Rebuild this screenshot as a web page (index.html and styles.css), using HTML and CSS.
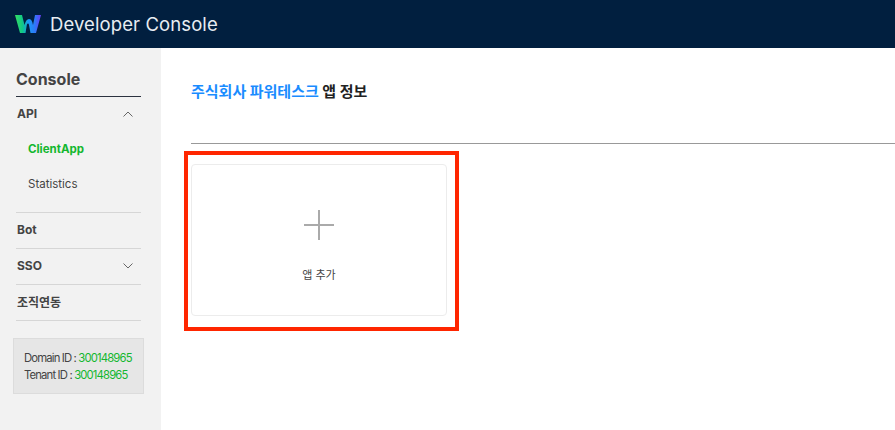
FILE: index.html
```html
<!DOCTYPE html>
<html lang="ko">

<head>
    <meta charset="UTF-8">
    <meta name="viewport" content="width=device-width, initial-scale=1.0">
    <title>Developer Console</title>
    <link rel="stylesheet" href="styles.css">
</head>

<body>

    <header class="topbar">
        <svg class="logo" width="26" height="20" viewBox="0 0 26 20">
            <defs>
                <linearGradient id="logoFill" x1="0" y1="0" x2="1" y2="0">
                    <stop offset="0" stop-color="#35e060"></stop>
                    <stop offset="0.3" stop-color="#0fc58a"></stop>
                    <stop offset="0.5" stop-color="#1a9bf5"></stop>
                    <stop offset="0.75" stop-color="#2a7cf8"></stop>
                    <stop offset="1" stop-color="#6a3df5"></stop>
                </linearGradient>
            </defs>
            <path d="M0 1H7L9.500 11C10.500 7 12 5 14 5C16.500 5 17.500 8 18 11L20 1H26L21 19H15.500L14 11C13.800 10 13.500 9.500 13 9.500C12.500 9.500 12 10 11.800 11L10.500 19H5Z" fill="url(#logoFill)"></path>
        </svg>
        <span class="topbar-title">Developer Console</span>
    </header>

    <div class="layout">
        <aside class="sidebar">
            <h2 class="sidebar-title">Console</h2>

            <div class="menu-group menu-group-open">
                <div class="menu-head">
                    <span>API</span>
                    <svg class="chevron" width="10" height="6" viewBox="0 0 10 6"><path d="M.5 5.500L5 1l4.500 4.500"></path></svg>
                </div>
                <a class="submenu submenu-active">ClientApp</a>
                <a class="submenu">Statistics</a>
            </div>

            <div class="menu-group">
                <div class="menu-head"><span>Bot</span></div>
            </div>

            <div class="menu-group">
                <div class="menu-head">
                    <span>SSO</span>
                    <svg class="chevron" width="10" height="6" viewBox="0 0 10 6"><path d="M.5 .5L5 5l4.500-4.500"></path></svg>
                </div>
            </div>

            <div class="menu-group">
                <div class="menu-head"><span>조직연동</span></div>
            </div>

            <div class="id-box">
                <p>Domain ID : <b>300148965</b></p>
                <p>Tenant ID : <b>300148965</b></p>
            </div>
        </aside>

        <main class="content">
            <h1 class="page-title"><em>주식회사 파워테스크</em> 앱 정보</h1>
            <hr class="divider">

            <div class="app-list">
                <div class="add-card">
                    <span class="plus"></span>
                    <span class="add-label">앱 추가</span>
                    <div class="highlight"></div>
                </div>
            </div>
        </main>
    </div>

</body>

</html>
```

FILE: styles.css
```css
* {
    margin: 0;
    box-sizing: border-box;
}

body {
    font-family: Inter, "Noto Sans CJK KR", sans-serif;
    width: 895px;
    height: 430px;
    overflow: hidden;
    background-color: #fff;
    color: #333;
}

.topbar {
    height: 48px;
    background-color: #011f3f;
    display: flex;
    align-items: center;
    padding-left: 15px;
    gap: 9px;
}

.logo {
    flex-shrink: 0;
}

.topbar-title {
    color: #e8edf2;
    font-size: 18.500px;
    letter-spacing: 0.1px;
}

.layout {
    display: flex;
    height: 382px;
}

.sidebar {
    width: 161px;
    background-color: #f2f2f2;
    padding: 21px 20px 0 16px;
    flex-shrink: 0;
}

.sidebar-title {
    font-size: 16px;
    line-height: 20px;
    height: 28px;
    font-weight: 700;
    color: #444;
    border-bottom: 1px solid #2c3340;
}

.menu-group {
    border-bottom: 1px solid #d6d6d6;
}

.menu-group-open {
    padding-bottom: 10px;
}

.menu-head {
    height: 35px;
    padding: 0 8px 2px 1px;
    display: flex;
    align-items: center;
    justify-content: space-between;
    font-size: 12px;
    font-weight: 700;
    color: #444;
}

.chevron {
    fill: none;
    stroke: #666;
    stroke-width: 1;
}

.submenu {
    display: block;
    height: 35px;
    line-height: 35px;
    padding-left: 12px;
    font-size: 11.500px;
    color: #444;
}

.submenu-active {
    color: #13b72f;
    font-weight: 700;
}

.id-box {
    margin: 17px -3px 0 -3px;
    height: 56px;
    padding: 11px 0 0 10px;
    background-color: #e6e6e6;
    border: 1px solid #dcdcdc;
    font-size: 11.300px;
    line-height: 17px;
    letter-spacing: -0.85px;
    white-space: nowrap;
    color: #444;
}

.id-box b {
    color: #13b72f;
    font-weight: 400;
}

.content {
    flex: 1;
    padding: 34px 0 0 30px;
}

.page-title {
    font-size: 15px;
    line-height: 20px;
    font-weight: 700;
    color: #222;
}

.page-title em {
    font-style: normal;
    color: #1a8cff;
}

.divider {
    border: none;
    border-top: 1px solid #999;
    margin-top: 41px;
}

.app-list {
    padding-top: 20px;
}

.add-card {
    position: relative;
    width: 256px;
    height: 152px;
    border: 1px solid #ececec;
    border-radius: 4px;
    display: flex;
    flex-direction: column;
    align-items: center;
    padding-top: 45px;
}

.plus {
    width: 30px;
    height: 30px;
    background:
        linear-gradient(#aaa, #aaa) center / 30px 2px no-repeat,
        linear-gradient(#aaa, #aaa) center / 2px 30px no-repeat;
}

.add-label {
    margin-top: 26px;
    font-size: 11px;
    line-height: 18px;
    color: #444;
}

/* red annotation frame over the card */
.highlight {
    position: absolute;
    left: -8px;
    top: -14px;
    width: 275px;
    height: 180px;
    border: 4px solid #ff2600;
}
```
